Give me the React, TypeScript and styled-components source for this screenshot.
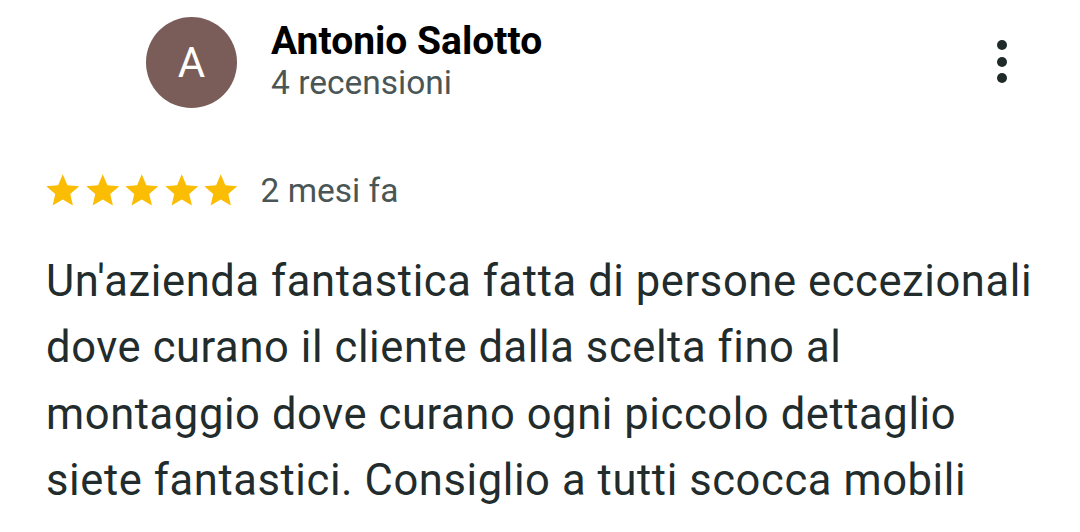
import React from "react";
import styled, { createGlobalStyle } from "styled-components";

const Global = createGlobalStyle`
  html, body { margin: 0; padding: 0; background: #ffffff; }
  body { font-family: Roboto, "Noto Sans", Arial, sans-serif; }
`;

const Page = styled.div`
  width: 1080px;
  height: 532px;
  overflow: hidden;
  background: #fff;
  box-sizing: border-box;
  padding: 17px 0 0 46px;
`;

const Header = styled.div`
  display: flex;
  align-items: flex-start;
  padding-left: 100px;
  padding-right: 73px;
`;

const Avatar = styled.div`
  width: 91px;
  height: 91px;
  border-radius: 50%;
  background: #7a5d59;
  color: #fff;
  display: flex;
  align-items: center;
  justify-content: center;
  font-size: 42px;
  font-weight: 400;
  flex-shrink: 0;
`;

const Who = styled.div`
  display: flex;
  flex-direction: column;
  margin-left: 34px;
  flex: 1;
`;

const Name = styled.div`
  font-size: 39px;
  font-weight: 700;
  color: #000;
  line-height: 44px;
  margin-top: 2px;
`;

const Sub = styled.div`
  font-size: 33.5px;
  color: #4a5656;
  line-height: 40px;
`;

const Kebab = styled.button`
  border: 0;
  background: none;
  padding: 0;
  margin-top: 23px;
  display: flex;
  flex-direction: column;
  gap: 6.5px;
`;

const Dot = styled.span`
  width: 10px;
  height: 10px;
  border-radius: 50%;
  background: #1f2a2a;
`;

const RatingRow = styled.div`
  display: flex;
  align-items: center;
  margin-top: 63px;
`;

const Stars = styled.div`
  display: flex;
  margin-left: -3px;
`;

const When = styled.span`
  font-size: 33.5px;
  color: #4a5656;
  margin-left: 20px;
`;

const Body = styled.p`
  margin: 38px 0 0 0;
  font-size: 43.5px;
  line-height: 66.5px;
  letter-spacing: 0.6px;
  color: #222c2c;
  width: 995px;
`;

const Star = () => (
  <svg width="39.5" height="39.5" viewBox="0 0 24 24">
    <path
      fill="#fbbc04"
      d="M12 17.27L18.18 21l-1.64-7.03L22 9.24l-7.19-.61L12 2 9.19 8.63 2 9.24l5.46 4.73L5.82 21z"
    />
  </svg>
);

export default function App() {
  return (
    <>
      <Global />
      <Page>
        <Header>
          <Avatar>A</Avatar>
          <Who>
            <Name>Antonio Salotto</Name>
            <Sub>4 recensioni</Sub>
          </Who>
          <Kebab aria-label="Altro">
            <Dot />
            <Dot />
            <Dot />
          </Kebab>
        </Header>
        <RatingRow>
          <Stars>
            {[0, 1, 2, 3, 4].map((i) => (
              <Star key={i} />
            ))}
          </Stars>
          <When>2 mesi fa</When>
        </RatingRow>
        <Body>
          Un'azienda fantastica fatta di persone eccezionali dove curano il cliente dalla scelta fino al montaggio dove curano ogni piccolo dettaglio siete fantastici. Consiglio a tutti scocca mobili
        </Body>
      </Page>
    </>
  );
}
